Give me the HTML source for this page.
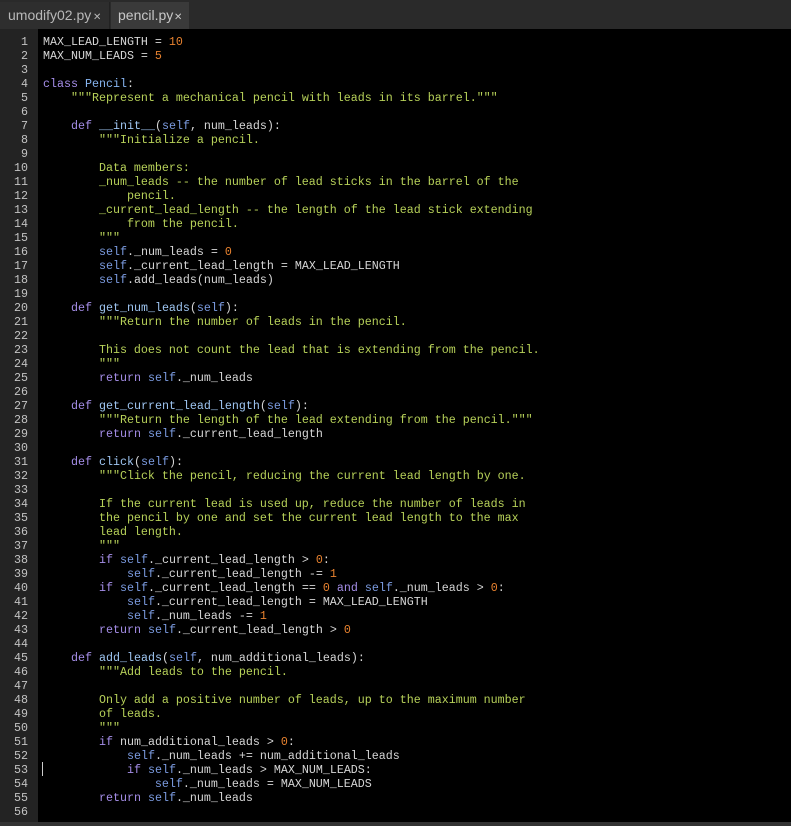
<!DOCTYPE html>
<html><head><meta charset="utf-8"><style>
body{margin:0;width:791px;height:826px;background:#000;overflow:hidden;font-family:"Liberation Sans",sans-serif}
#tabs{position:absolute;left:0;top:0;width:791px;height:29px;background:#2a2a2a}
.tab{position:absolute;top:2px;height:27px;font-size:14px;line-height:27px;color:#b8b8b8;white-space:nowrap;overflow:hidden}
#t1{left:0;width:109px;background:#2e2e2e;border-right:1px solid #222}
#t2{left:111px;width:78px;background:#3a3a3a;color:#c8c8c8}
.tab .l{position:absolute;left:8px;top:0}.x{position:absolute;top:3px;font-size:10px;line-height:26px}
#gut{position:absolute;left:0;top:29px;width:38px;height:793px;background:#232323}
#bot{position:absolute;left:0;top:822px;width:791px;height:4px;background:#333}
pre{margin:0;position:absolute;top:35px;font-family:"Liberation Mono",monospace;font-size:11.67px;line-height:14px;color:#d6d6d6}
#ln{left:0;width:28px;text-align:right;color:#c4c4c4}
#code{left:43px}
.k{color:#a58ee8}.s{color:#7b9be0}.f{color:#9fc6f2}.q{color:#b7d159}.n{color:#e8822f}.c{color:#86b4f0}
#cur{position:absolute;left:42px;top:762px;width:1px;height:14px;background:#ccc}
</style></head><body>
<div id="tabs"><div class="tab" id="t1"><span class="l">umodify02.py</span><span class="x" style="left:93px">✕</span></div><div class="tab" id="t2"><span class="l" style="left:7px">pencil.py</span><span class="x" style="left:63px">✕</span></div></div>
<div id="gut"></div><div id="bot"></div><div id="cur"></div>
<pre id="ln">1
2
3
4
5
6
7
8
9
10
11
12
13
14
15
16
17
18
19
20
21
22
23
24
25
26
27
28
29
30
31
32
33
34
35
36
37
38
39
40
41
42
43
44
45
46
47
48
49
50
51
52
53
54
55
56</pre>
<pre id="code">MAX_LEAD_LENGTH = <span class="n">10</span>
MAX_NUM_LEADS = <span class="n">5</span>

<span class="k">class</span> <span class="c">Pencil</span>:
    <span class="q">"""Represent a mechanical pencil with leads in its barrel."""</span>

    <span class="k">def</span> <span class="f">__init__</span>(<span class="s">self</span>, num_leads):
        <span class="q">"""Initialize a pencil.

        Data members:
        _num_leads -- the number of lead sticks in the barrel of the
            pencil.
        _current_lead_length -- the length of the lead stick extending
            from the pencil.
        """</span>
        <span class="s">self</span>._num_leads = <span class="n">0</span>
        <span class="s">self</span>._current_lead_length = MAX_LEAD_LENGTH
        <span class="s">self</span>.add_leads(num_leads)

    <span class="k">def</span> <span class="f">get_num_leads</span>(<span class="s">self</span>):
        <span class="q">"""Return the number of leads in the pencil.

        This does not count the lead that is extending from the pencil.
        """</span>
        <span class="k">return</span> <span class="s">self</span>._num_leads

    <span class="k">def</span> <span class="f">get_current_lead_length</span>(<span class="s">self</span>):
        <span class="q">"""Return the length of the lead extending from the pencil."""</span>
        <span class="k">return</span> <span class="s">self</span>._current_lead_length

    <span class="k">def</span> <span class="f">click</span>(<span class="s">self</span>):
        <span class="q">"""Click the pencil, reducing the current lead length by one.

        If the current lead is used up, reduce the number of leads in
        the pencil by one and set the current lead length to the max
        lead length.
        """</span>
        <span class="k">if</span> <span class="s">self</span>._current_lead_length &gt; <span class="n">0</span>:
            <span class="s">self</span>._current_lead_length -= <span class="n">1</span>
        <span class="k">if</span> <span class="s">self</span>._current_lead_length == <span class="n">0</span> <span class="k">and</span> <span class="s">self</span>._num_leads &gt; <span class="n">0</span>:
            <span class="s">self</span>._current_lead_length = MAX_LEAD_LENGTH
            <span class="s">self</span>._num_leads -= <span class="n">1</span>
        <span class="k">return</span> <span class="s">self</span>._current_lead_length &gt; <span class="n">0</span>

    <span class="k">def</span> <span class="f">add_leads</span>(<span class="s">self</span>, num_additional_leads):
        <span class="q">"""Add leads to the pencil.

        Only add a positive number of leads, up to the maximum number
        of leads.
        """</span>
        <span class="k">if</span> num_additional_leads &gt; <span class="n">0</span>:
            <span class="s">self</span>._num_leads += num_additional_leads
            <span class="k">if</span> <span class="s">self</span>._num_leads &gt; MAX_NUM_LEADS:
                <span class="s">self</span>._num_leads = MAX_NUM_LEADS
        <span class="k">return</span> <span class="s">self</span>._num_leads
</pre>
</body></html>
